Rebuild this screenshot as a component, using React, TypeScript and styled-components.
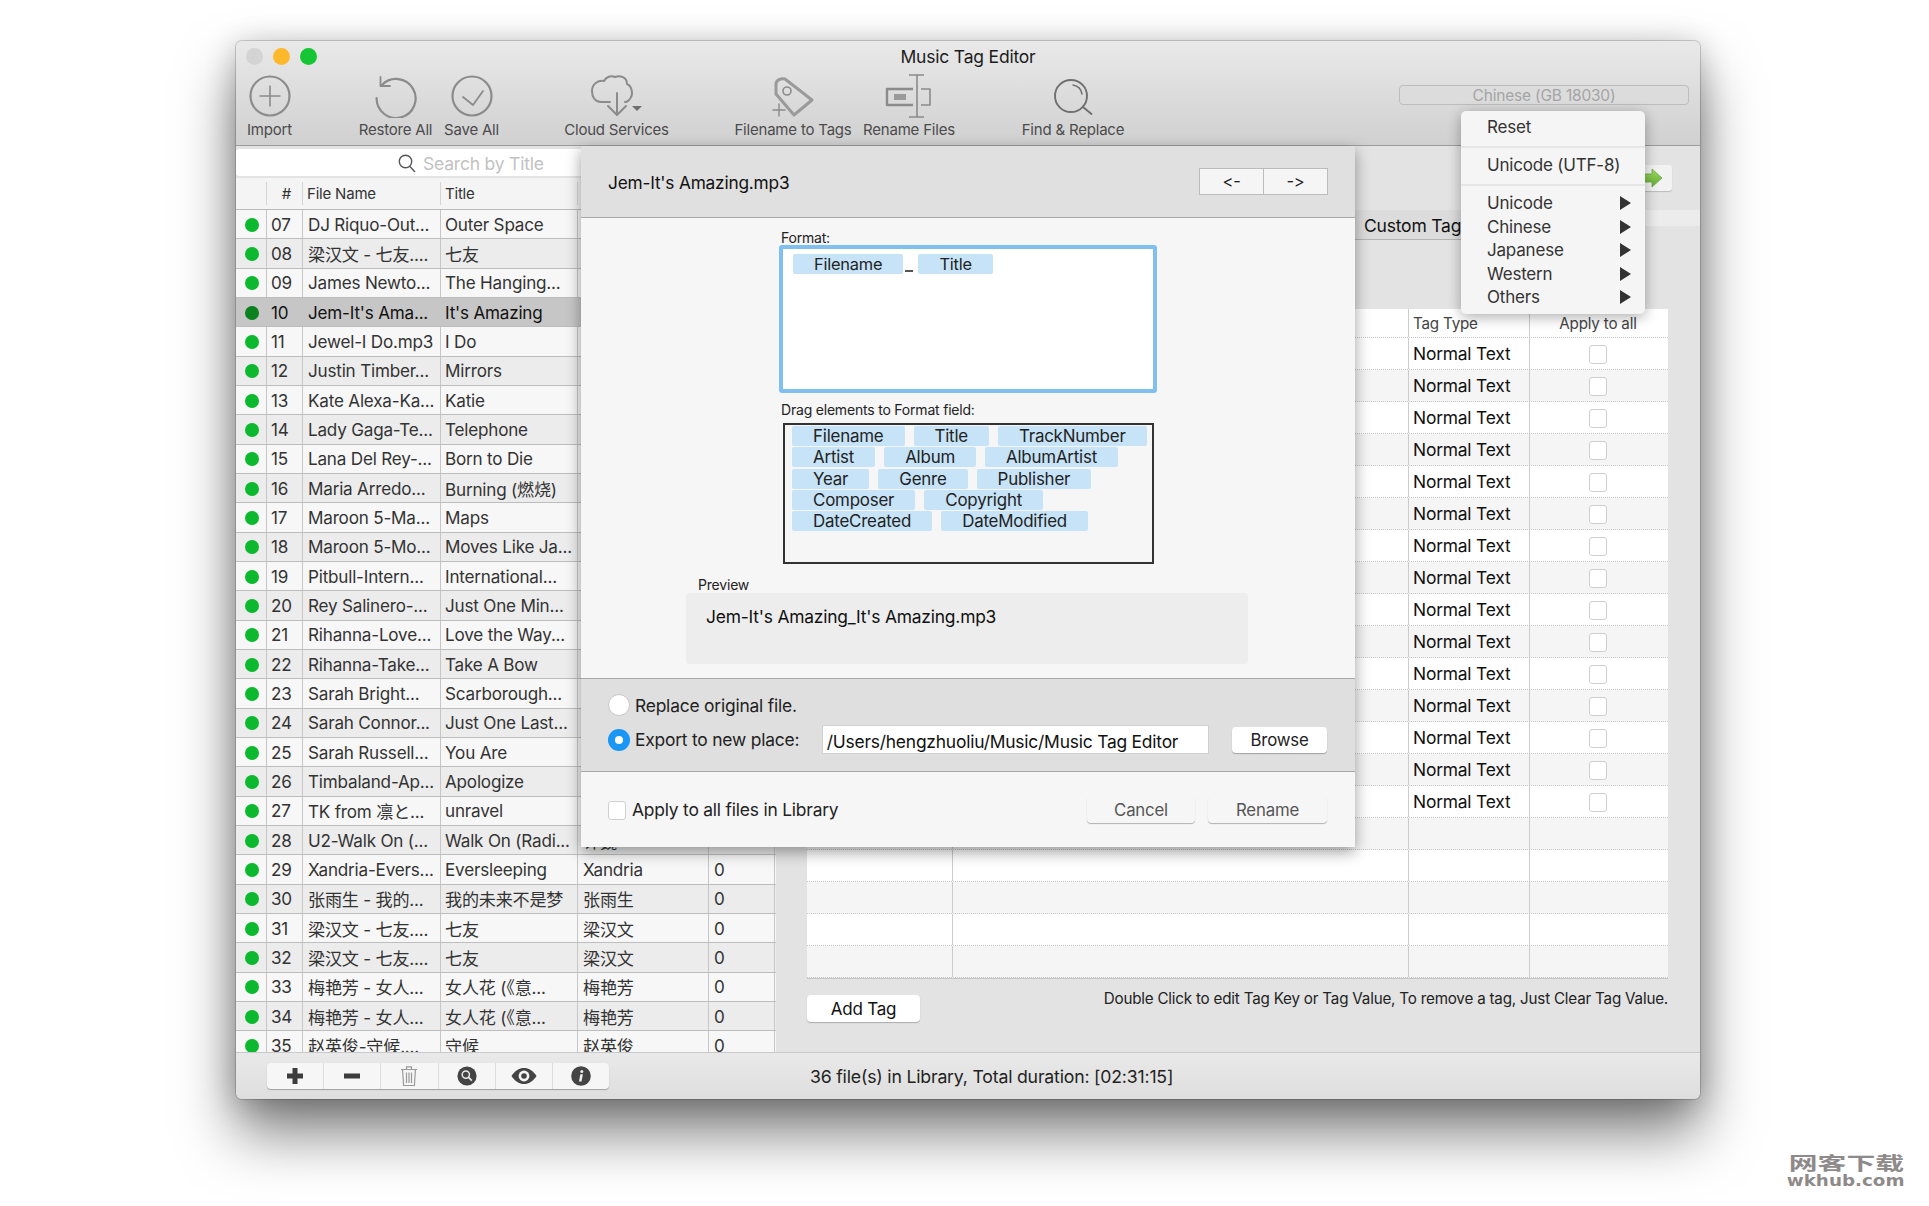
import styled, { createGlobalStyle } from 'styled-components'

const FONT = `Inter, "Noto Sans CJK SC", "Liberation Sans", sans-serif`

const GlobalStyle = createGlobalStyle`
  html, body {
    margin: 0;
    padding: 0;
    background: #fff;
    font-family: ${FONT};
    letter-spacing: -0.2px;
  }
  * { box-sizing: border-box; }
`

const Page = styled.div`
  position: relative;
  width: 1929px;
  height: 1206px;
  padding: 41px 0 0 236px;
  overflow: hidden;
  background: #fff;
`

const Window = styled.div`
  position: relative;
  display: flex;
  flex-direction: column;
  width: 1464px;
  height: 1058px;
  border-radius: 6px;
  background: #e3e3e3;
  box-shadow: 0 0 0 1px rgba(0, 0, 0, 0.16), 0 34px 58px rgba(0, 0, 0, 0.5), 0 4px 30px rgba(0, 0, 0, 0.22);
`

const Header = styled.header`
  flex: none;
  height: 105px;
  border-radius: 6px 6px 0 0;
  border-bottom: 1px solid #9c9c9c;
  background: linear-gradient(#e9e9e9, #d0d0d0);
`

const TitleBar = styled.div`
  display: grid;
  grid-template-columns: 1fr auto 1fr;
  align-items: center;
  height: 31px;
  padding: 0 10px;
`

const Lights = styled.div`
  display: flex;
  gap: 10px;
`

const Light = styled.span<{ $color: string }>`
  width: 17px;
  height: 17px;
  border-radius: 50%;
  background: ${(p) => p.$color};
`

const WindowTitle = styled.div`
  font-size: 17.5px;
  color: #1c1c1c;
`

const Toolbar = styled.div`
  display: flex;
  height: 73px;
  padding: 2px 0 0 11px;
`

const ToolItem = styled.div<{ $width: number; $gap?: number }>`
  display: flex;
  flex-direction: column;
  align-items: center;
  width: ${(p) => p.$width}px;
  margin-left: ${(p) => p.$gap ?? 0}px;
  color: #4b4b4b;
  svg {
    display: block;
    height: 44px;
  }
`

const ToolLabel = styled.span`
  margin-top: 3px;
  font-size: 15px;
  line-height: 17px;
  white-space: nowrap;
`

const EncodingField = styled.div`
  display: flex;
  align-items: center;
  justify-content: center;
  width: 290px;
  height: 20px;
  margin: 11px 11px 0 auto;
  border: 1px solid #bdbdbd;
  border-radius: 4px;
  background: #dcdcdc;
  color: #a4a4a4;
  font-size: 15.5px;
`

const Body = styled.div`
  flex: 1;
  display: flex;
  min-height: 0;
`

const Library = styled.section`
  flex: none;
  display: flex;
  flex-direction: column;
  width: 540px;
  padding-top: 3px;
  overflow: hidden;
`

const SearchBar = styled.div`
  flex: none;
  display: flex;
  align-items: center;
  gap: 7px;
  height: 27px;
  margin-bottom: 2px;
  padding: 1px 0 0 162px;
  border-radius: 3px 0 0 3px;
  background: #fff;
  color: #c2c2c2;
  font-size: 17.5px;
`

const ListHeader = styled.div`
  flex: none;
  display: grid;
  grid-template-columns: 31px 36px 138px 137px 131px 66px;
  height: 32px;
  border-bottom: 1px solid #bbb;
  background: #f4f4f4;
  color: #333;
  font-size: 15px;
`

const HeadCell = styled.div<{ $center?: boolean }>`
  display: flex;
  align-items: center;
  justify-content: ${(p) => (p.$center ? 'center' : 'flex-start')};
  margin: 4px 0;
  padding-left: 4px;
  border-right: 1px solid #d5d5d5;
`

const ListRow = styled.div<{ $odd: boolean; $selected: boolean }>`
  flex: none;
  display: grid;
  grid-template-columns: 31px 36px 138px 137px 131px 66px;
  height: 29.33px;
  border-bottom: 1px solid #bdbdbd;
  background: ${(p) => (p.$selected ? '#c6c6c6' : p.$odd ? '#ececec' : '#f7f7f7')};
  color: ${(p) => (p.$selected ? '#111' : '#333')};
  font-size: 17.1px;
`

const Cell = styled.div<{ $pad?: number }>`
  display: flex;
  align-items: center;
  padding-left: ${(p) => p.$pad ?? 5}px;
  border-right: 1px solid #c6c6c6;
  white-space: nowrap;
  overflow: hidden;
`

const StatusDot = styled.span<{ $selected: boolean }>`
  width: 14px;
  height: 14px;
  border-radius: 50%;
  background: ${(p) => (p.$selected ? '#0a801f' : '#0cb92e')};
`

const StatusCell = styled(Cell)`
  justify-content: center;
  padding: 1px 0 0 2px;
`

const TagPanel = styled.section`
  flex: 1;
  display: flex;
  flex-direction: column;
  min-width: 0;
`

const ArrowRow = styled.div`
  flex: none;
  display: flex;
  justify-content: flex-end;
  height: 26px;
  margin: 19px 28px 0 0;
`

const ArrowButton = styled.div`
  display: flex;
  align-items: center;
  justify-content: flex-end;
  width: 60px;
  padding-right: 8px;
  border-radius: 3px;
  background: #f2f2f2;
  box-shadow: 0 1px 1px rgba(0, 0, 0, 0.18);
`

const TabStrip = styled.div`
  flex: none;
  height: 30px;
  margin-top: 19px;
  padding-left: 579px;
  background: linear-gradient(#ececec 0 16px, transparent 16px);
`

const Tab = styled.div`
  display: flex;
  align-items: center;
  width: 140px;
  height: 30px;
  padding: 1px 0 0 9px;
  border-bottom: 1px solid #b4b4b4;
  background: #dcdcdc;
  color: #111;
  font-size: 17.5px;
`

const TagTable = styled.div`
  flex: none;
  width: 861px;
  margin: 69px 0 0 31px;
  border-bottom: 1px solid #c6c6c6;
  background: #fff;
`

const TagRowGrid = styled.div<{ $alt?: boolean; $height: number }>`
  display: grid;
  grid-template-columns: 146px 456px 121px 138px;
  height: ${(p) => p.$height}px;
  border-bottom: 1px dotted #c8c8c8;
  background: ${(p) => (p.$alt ? '#f5f5f5' : '#fff')};
`

const TagCell = styled.div<{ $center?: boolean; $head?: boolean }>`
  display: flex;
  align-items: center;
  justify-content: ${(p) => (p.$center ? 'center' : 'flex-start')};
  padding: ${(p) => (p.$center ? '0 2px 0 0' : '0 0 0 4px')};
  border-right: 1px solid #ccc;
  color: ${(p) => (p.$head ? '#444' : '#111')};
  font-size: ${(p) => (p.$head ? 15.2 : 17.4)}px;
  &:last-child {
    border-right: none;
  }
`

const Checkbox = styled.span`
  flex: none;
  width: 18px;
  height: 19px;
  margin-top: 1px;
  border: 1px solid #cfcfcf;
  border-radius: 3px;
  background: #fff;
`

const TagActions = styled.div`
  flex: none;
  display: flex;
  justify-content: space-between;
  width: 861px;
  margin: 16px 0 0 31px;
`

const AddTagButton = styled.div`
  display: flex;
  align-items: center;
  justify-content: center;
  width: 113px;
  height: 27px;
  border-radius: 4px;
  background: #fff;
  box-shadow: 0 1px 1px rgba(0, 0, 0, 0.25);
  color: #111;
  font-size: 17px;
`

const Hint = styled.div`
  margin-top: -5px;
  color: #222;
  font-size: 15.2px;
  line-height: 18px;
`

const Footer = styled.footer`
  flex: none;
  display: flex;
  align-items: center;
  height: 47px;
  padding-left: 31px;
  border-top: 1px solid #c9c9c9;
  border-radius: 0 0 6px 6px;
  background: linear-gradient(#e9e9e9, #dedede);
`

const FooterButtons = styled.div`
  display: flex;
  width: 342px;
  height: 26px;
  border-radius: 4px;
  background: #f6f6f6;
  box-shadow: 0 1px 1px rgba(0, 0, 0, 0.28);
`

const FooterButton = styled.div`
  flex: 1;
  display: flex;
  align-items: center;
  justify-content: center;
  border-right: 1px solid #dcdcdc;
  &:last-child {
    border-right: none;
  }
`

const StatusText = styled.div`
  margin-left: 201px;
  color: #222;
  font-size: 17.7px;
`

const Sheet = styled.div`
  position: absolute;
  left: 345px;
  top: 105px;
  display: flex;
  flex-direction: column;
  width: 774px;
  height: 701px;
  background: #f6f6f6;
  box-shadow: 0 5px 14px rgba(0, 0, 0, 0.38);
`

const SheetHeader = styled.div`
  flex: none;
  display: flex;
  align-items: center;
  justify-content: space-between;
  height: 72px;
  padding: 1px 27px 0 27px;
  border-bottom: 1px solid #a8a8a8;
  background: #e0e0e0;
  color: #111;
  font-size: 17.3px;
`

const Stepper = styled.div`
  display: flex;
  width: 129px;
  height: 27px;
  margin-top: -2px;
  border: 1px solid #bcbcbc;
  background: #f5f5f5;
`

const StepButton = styled.div`
  flex: 1;
  display: flex;
  align-items: center;
  justify-content: center;
  font-size: 16.5px;
  color: #222;
  & + & {
    border-left: 1px solid #bcbcbc;
  }
`

const SheetContent = styled.div`
  flex: none;
  display: flex;
  flex-direction: column;
  align-items: flex-start;
  height: 460px;
  padding-top: 12px;
`

const SmallLabel = styled.div<{ $left: number; $top?: number }>`
  height: 16px;
  margin: ${(p) => p.$top ?? 0}px 0 0 ${(p) => p.$left}px;
  color: #222;
  font-size: 14px;
  line-height: 16px;
`

const FormatBox = styled.div`
  display: flex;
  align-items: flex-start;
  width: 378px;
  height: 148px;
  margin: -1px 0 0 198px;
  padding: 5px 0 0 10px;
  border: 4px solid #7fc0f0;
  border-radius: 3px;
  background: #fff;
`

const Token = styled.span`
  flex: none;
  display: flex;
  align-items: center;
  height: 20px;
  padding: 0 21px;
  border-radius: 2px;
  background: #c6e3f8;
  color: #222;
  font-size: 16.4px;
`

const Underscore = styled.span`
  flex: none;
  width: 8px;
  height: 2px;
  margin: 16px 5px 0 2px;
  background: #555;
`

const ElementsBox = styled.div`
  display: flex;
  flex-direction: column;
  gap: 1.3px;
  width: 371px;
  height: 141px;
  margin: 5px 0 0 202px;
  padding: 1px 0 0 7px;
  border: 2px solid #333;
  background: #f6f6f6;
  ${Token} {
    font-size: 16.9px;
  }
`

const TokenRow = styled.div`
  display: flex;
  gap: 9px;
`

const PreviewBox = styled.div`
  width: 562px;
  height: 71px;
  margin-left: 105px;
  padding: 14px 20px;
  border-radius: 3px;
  background: #ededed;
  color: #111;
  font-size: 17.4px;
  line-height: 20px;
`

const OptionsBand = styled.div`
  flex: none;
  display: flex;
  flex-direction: column;
  height: 94px;
  padding: 15px 28px 0 27px;
  border-top: 1px solid #a8a8a8;
  border-bottom: 1px solid #a8a8a8;
  background: #dfdfdf;
  color: #222;
  font-size: 17.4px;
`

const OptionRow = styled.div<{ $top?: number }>`
  display: flex;
  align-items: center;
  margin-top: ${(p) => p.$top ?? 0}px;
`

const Radio = styled.span<{ $on?: boolean }>`
  flex: none;
  display: flex;
  align-items: center;
  justify-content: center;
  width: 22px;
  height: 22px;
  margin-right: 5px;
  border-radius: 50%;
  border: ${(p) => (p.$on ? 'none' : '1px solid #c8c8c8')};
  background: ${(p) => (p.$on ? '#1a96f5' : '#fff')};
  &::after {
    content: '';
    display: ${(p) => (p.$on ? 'block' : 'none')};
    width: 8px;
    height: 8px;
    border-radius: 50%;
    background: #fff;
  }
`

const ExportLabel = styled.span`
  width: 188px;
  white-space: nowrap;
`

const PathInput = styled.div`
  display: flex;
  align-items: center;
  width: 386px;
  height: 27px;
  padding: 4px 0 0 4px;
  background: #fff;
  box-shadow: 0 0 0 1px #d0d0d0;
  color: #111;
  font-size: 17.4px;
`

const PlainButton = styled.div<{ $width: number; $muted?: boolean }>`
  flex: none;
  display: flex;
  align-items: center;
  justify-content: center;
  width: ${(p) => p.$width}px;
  height: 26px;
  border-radius: 4px;
  background: ${(p) => (p.$muted ? '#f6f6f6' : '#fff')};
  box-shadow: 0 1px 1px rgba(0, 0, 0, 0.28);
  color: ${(p) => (p.$muted ? '#555' : '#222')};
  font-size: 16.8px;
`

const BrowseButton = styled(PlainButton)`
  margin-left: 24px;
`

const SheetFooter = styled.div`
  flex: 1;
  display: flex;
  align-items: center;
  gap: 13px;
  padding: 0 28px 0 27px;
  color: #222;
  font-size: 17.4px;
`

const ApplyLabel = styled.span`
  margin: 0 auto 0 -7px;
`

const Menu = styled.div`
  position: absolute;
  left: 1225px;
  top: 70px;
  width: 184px;
  height: 203px;
  padding-top: 4px;
  border-radius: 5px;
  background: #f5f5f5;
  box-shadow: 0 3px 14px rgba(0, 0, 0, 0.32);
  color: #333;
  font-size: 17px;
`

const MenuItem = styled.div`
  display: flex;
  align-items: center;
  justify-content: space-between;
  height: 23.4px;
  padding: 0 14px 0 26px;
`

const MenuRule = styled.div<{ $top: number; $bottom: number }>`
  height: 2px;
  margin: ${(p) => p.$top}px 0 ${(p) => p.$bottom}px;
  background: #e6e6e6;
`

const MenuArrow = styled.span`
  width: 0;
  height: 0;
  border-left: 11px solid #333;
  border-top: 7px solid transparent;
  border-bottom: 7px solid transparent;
`

const Watermark = styled.div`
  position: absolute;
  right: 25px;
  top: 1152px;
  display: flex;
  flex-direction: column;
  align-items: flex-end;
  color: #8f8a8a;
  font-weight: 700;
  line-height: 20px;
`

const WatermarkCjk = styled.span`
  font-family: "Noto Sans CJK SC", sans-serif;
  font-size: 18px;
  letter-spacing: 0;
  transform: scaleX(1.6);
  transform-origin: right center;
`

const WatermarkLatin = styled.span`
  margin-top: -1px;
  font-family: "DejaVu Sans", sans-serif;
  font-size: 15px;
  letter-spacing: 0;
  transform: scaleX(1.22);
  transform-origin: right center;
`

const toolStroke = { fill: 'none', stroke: '#8b8b8b', strokeLinecap: 'round', strokeLinejoin: 'round' } as const

const ImportIcon = () => (
  <svg width="44" height="44" viewBox="0 0 44 44" {...toolStroke} strokeWidth="2.2">
    <circle cx="22" cy="22" r="19.5" />
    <path d="M22 12v20M12 22h20" strokeWidth="1.6" />
  </svg>
)

const RestoreIcon = () => (
  <svg width="44" height="44" viewBox="0 0 44 44" {...toolStroke} strokeWidth="2.2">
    <path d="M8 11 A19.5 19.5 0 1 1 2.6 24" />
    <path d="M6.5 3v9H16" strokeWidth="1.8" />
  </svg>
)

const SaveIcon = () => (
  <svg width="44" height="44" viewBox="0 0 44 44" {...toolStroke} strokeWidth="2.2">
    <circle cx="22" cy="22" r="19.5" />
    <path d="M13 23l10 8 10-14" strokeWidth="1.8" />
  </svg>
)

const CloudIcon = () => (
  <svg width="56" height="44" viewBox="0 0 56 44" {...toolStroke} strokeWidth="2">
    <path d="M21 28H12C6 28 3 23 3 17 3 10 9 6 15 7c2-4 7-6 11-4 5-2 12 0 12 7 5 2 6 10 4 13-1 3-4 5-6 5" />
    <path d="M28 19v21M19 32l9 9 9-9" />
    <path d="M43 32h10l-5 5z" fill="#6e6e6e" stroke="none" />
  </svg>
)

const TagIcon = () => (
  <svg width="44" height="44" viewBox="0 0 44 44" {...toolStroke} strokeWidth="3" stroke="#9a9a9a">
    <path d="M5 10c0-4 5-6 9-5l27 21-18 15L5 20z" />
    <circle cx="16" cy="17" r="4" strokeWidth="1.6" stroke="#8b8b8b" />
    <path d="M8 30v12M2 36h12" strokeWidth="1.4" stroke="#8b8b8b" />
  </svg>
)

const RenameIcon = () => (
  <svg width="48" height="44" viewBox="0 0 48 44" {...toolStroke} strokeWidth="2" strokeLinecap="butt">
    <path d="M28 15H2v16h26" strokeWidth="2.4" />
    <rect x="9" y="20" width="12" height="6" fill="#9a9a9a" stroke="none" />
    <path d="M32 1v42M24 1h15M24 43h15" strokeWidth="1.6" />
    <path d="M36 15h9v16h-9" strokeWidth="1.6" />
  </svg>
)

const FindIcon = () => (
  <svg width="44" height="44" viewBox="0 0 44 44" {...toolStroke} stroke="#6f6f6f" strokeWidth="1.9">
    <circle cx="20" cy="22" r="16" />
    <path d="M32 33l8.5 7" />
    <path d="M22 11a11 11 0 0 1 9 9" strokeWidth="1.5" />
  </svg>
)

const SearchGlyph = () => (
  <svg width="18" height="19" viewBox="0 0 18 19" fill="none" stroke="#555" strokeWidth="1.4">
    <circle cx="7.5" cy="7.5" r="6.2" />
    <path d="M12 12.5l5 5.5" />
  </svg>
)

const GreenArrow = () => (
  <svg width="26" height="20" viewBox="0 0 26 20">
    <defs>
      <linearGradient id="arrowFill" x1="0" y1="0" x2="0" y2="1">
        <stop offset="0" stopColor="#a5dd62" />
        <stop offset="1" stopColor="#5cab33" />
      </linearGradient>
    </defs>
    <path d="M1 6h13V1l10 9-10 9v-5H1z" fill="url(#arrowFill)" stroke="#6ba846" strokeWidth="0.8" />
  </svg>
)

const PlusGlyph = () => (
  <svg width="18" height="18" viewBox="0 0 18 18">
    <path d="M6.5 1h5v5.5H17v5h-5.5V17h-5v-5.5H1v-5h5.5z" fill="#3c3c3c" />
  </svg>
)

const MinusGlyph = () => (
  <svg width="18" height="18" viewBox="0 0 18 18">
    <rect x="1" y="6.5" width="16" height="5" fill="#3c3c3c" />
  </svg>
)

const TrashGlyph = () => (
  <svg width="18" height="22" viewBox="0 0 18 22" fill="none" stroke="#9a9a9a" strokeWidth="1.2">
    <path d="M1 4.5h16M6.5 4.5V1.8h5v2.7" />
    <path d="M2.6 5l1 15.5h10.8l1-15.5" />
    <path d="M6.5 7.5v10.5M9 7.5v10.5M11.5 7.5v10.5" />
  </svg>
)

const LensGlyph = () => (
  <svg width="20" height="20" viewBox="0 0 20 20">
    <circle cx="10" cy="10" r="9.6" fill="#444" />
    <circle cx="8.8" cy="8.6" r="3.6" fill="none" stroke="#e8e8e8" strokeWidth="1.5" />
    <path d="M11.4 11.2l3.4 3.4" stroke="#e8e8e8" strokeWidth="1.8" />
  </svg>
)

const EyeGlyph = () => (
  <svg width="26" height="18" viewBox="0 0 26 18">
    <path d="M0.5 9C4 3.5 8.5 1 13 1s9 2.5 12.5 8C22 14.5 17.5 17 13 17S4 14.5 0.5 9z" fill="#444" />
    <circle cx="13" cy="9" r="5.4" fill="#f6f6f6" />
    <circle cx="13" cy="9" r="2.8" fill="#444" />
  </svg>
)

const InfoGlyph = () => (
  <svg width="20" height="20" viewBox="0 0 20 20">
    <circle cx="10" cy="10" r="9.8" fill="#444" />
    <circle cx="10.8" cy="5.4" r="1.5" fill="#eee" />
    <path d="M9.3 8.2h2.6l-1.4 7.4H8z" fill="#eee" />
  </svg>
)

type Track = { n: string; file: string; title: string; artist?: string; count?: string }

// artist and count of rows 07-27 sit behind the rename sheet, so they stay empty
const tracks: Track[] = [
  { n: '07', file: 'DJ Riquo-Out...', title: 'Outer Space' },
  { n: '08', file: '梁汉文 - 七友....', title: '七友' },
  { n: '09', file: 'James Newto...', title: 'The Hanging...' },
  { n: '10', file: "Jem-It's Ama...", title: "It's Amazing" },
  { n: '11', file: 'Jewel-I Do.mp3', title: 'I Do' },
  { n: '12', file: 'Justin Timber...', title: 'Mirrors' },
  { n: '13', file: 'Kate Alexa-Ka...', title: 'Katie' },
  { n: '14', file: 'Lady Gaga-Te...', title: 'Telephone' },
  { n: '15', file: 'Lana Del Rey-...', title: 'Born to Die' },
  { n: '16', file: 'Maria Arredo...', title: 'Burning (燃烧)' },
  { n: '17', file: 'Maroon 5-Ma...', title: 'Maps' },
  { n: '18', file: 'Maroon 5-Mo...', title: 'Moves Like Ja...' },
  { n: '19', file: 'Pitbull-Intern...', title: 'International...' },
  { n: '20', file: 'Rey Salinero-...', title: 'Just One Min...' },
  { n: '21', file: 'Rihanna-Love...', title: 'Love the Way...' },
  { n: '22', file: 'Rihanna-Take...', title: 'Take A Bow' },
  { n: '23', file: 'Sarah Bright...', title: 'Scarborough...' },
  { n: '24', file: 'Sarah Connor...', title: 'Just One Last...' },
  { n: '25', file: 'Sarah Russell...', title: 'You Are' },
  { n: '26', file: 'Timbaland-Ap...', title: 'Apologize' },
  { n: '27', file: 'TK from 凛と...', title: 'unravel' },
  { n: '28', file: 'U2-Walk On (...', title: 'Walk On (Radi...', artist: '许巍' },
  { n: '29', file: 'Xandria-Evers...', title: 'Eversleeping', artist: 'Xandria', count: '0' },
  { n: '30', file: '张雨生 - 我的...', title: '我的未来不是梦', artist: '张雨生', count: '0' },
  { n: '31', file: '梁汉文 - 七友....', title: '七友', artist: '梁汉文', count: '0' },
  { n: '32', file: '梁汉文 - 七友....', title: '七友', artist: '梁汉文', count: '0' },
  { n: '33', file: '梅艳芳 - 女人...', title: '女人花 (《意...', artist: '梅艳芳', count: '0' },
  { n: '34', file: '梅艳芳 - 女人...', title: '女人花 (《意...', artist: '梅艳芳', count: '0' },
  { n: '35', file: '赵英俊-守候....', title: '守候', artist: '赵英俊', count: '0' },
]

const elementRows = [
  ['Filename', 'Title', 'TrackNumber'],
  ['Artist', 'Album', 'AlbumArtist'],
  ['Year', 'Genre', 'Publisher'],
  ['Composer', 'Copyright'],
  ['DateCreated', 'DateModified'],
]

const App = () => (
  <Page>
    <GlobalStyle />
    <Window>
      <Header>
        <TitleBar>
          <Lights>
            <Light $color="#d4d4d4" />
            <Light $color="#fdb92b" />
            <Light $color="#15c534" />
          </Lights>
          <WindowTitle>Music Tag Editor</WindowTitle>
        </TitleBar>
        <Toolbar>
          <ToolItem $width={45}>
            <ImportIcon />
            <ToolLabel>Import</ToolLabel>
          </ToolItem>
          <ToolItem $width={75} $gap={66}>
            <RestoreIcon />
            <ToolLabel>Restore All</ToolLabel>
          </ToolItem>
          <ToolItem $width={55} $gap={11}>
            <SaveIcon />
            <ToolLabel>Save All</ToolLabel>
          </ToolItem>
          <ToolItem $width={105} $gap={65}>
            <CloudIcon />
            <ToolLabel>Cloud Services</ToolLabel>
          </ToolItem>
          <ToolItem $width={118} $gap={65}>
            <TagIcon />
            <ToolLabel>Filename to Tags</ToolLabel>
          </ToolItem>
          <ToolItem $width={92} $gap={11}>
            <RenameIcon />
            <ToolLabel>Rename Files</ToolLabel>
          </ToolItem>
          <ToolItem $width={104} $gap={66}>
            <FindIcon />
            <ToolLabel>Find &amp; Replace</ToolLabel>
          </ToolItem>
          <EncodingField>Chinese (GB 18030)</EncodingField>
        </Toolbar>
      </Header>

      <Body>
        <Library>
          <SearchBar>
            <SearchGlyph />
            Search by Title
          </SearchBar>
          <ListHeader>
            <HeadCell />
            <HeadCell $center>#</HeadCell>
            <HeadCell>File Name</HeadCell>
            <HeadCell>Title</HeadCell>
            <HeadCell />
            <HeadCell />
          </ListHeader>
          {tracks.map((t, i) => {
            const selected = t.n === '10'
            return (
              <ListRow key={t.n} $odd={i % 2 === 1} $selected={selected}>
                <StatusCell>
                  <StatusDot $selected={selected} />
                </StatusCell>
                <Cell $pad={4}>{t.n}</Cell>
                <Cell>{t.file}</Cell>
                <Cell $pad={4}>{t.title}</Cell>
                <Cell>{t.artist}</Cell>
                <Cell>{t.count}</Cell>
              </ListRow>
            )
          })}
        </Library>

        <TagPanel>
          <ArrowRow>
            <ArrowButton>
              <GreenArrow />
            </ArrowButton>
          </ArrowRow>
          <TabStrip>
            <Tab>Custom Tag</Tab>
          </TabStrip>
          <TagTable>
            <TagRowGrid $height={29}>
              <TagCell $head />
              <TagCell $head />
              <TagCell $head>Tag Type</TagCell>
              <TagCell $head $center>
                Apply to all
              </TagCell>
            </TagRowGrid>
            {Array.from({ length: 20 }, (_, i) => (
              <TagRowGrid key={i} $height={32} $alt={i % 2 === 1}>
                <TagCell />
                <TagCell />
                <TagCell>{i < 15 ? 'Normal Text' : ''}</TagCell>
                <TagCell $center>{i < 15 ? <Checkbox /> : null}</TagCell>
              </TagRowGrid>
            ))}
          </TagTable>
          <TagActions>
            <AddTagButton>Add Tag</AddTagButton>
            <Hint>Double Click to edit Tag Key or Tag Value, To remove a tag, Just Clear Tag Value.</Hint>
          </TagActions>
        </TagPanel>
      </Body>

      <Footer>
        <FooterButtons>
          <FooterButton>
            <PlusGlyph />
          </FooterButton>
          <FooterButton>
            <MinusGlyph />
          </FooterButton>
          <FooterButton>
            <TrashGlyph />
          </FooterButton>
          <FooterButton>
            <LensGlyph />
          </FooterButton>
          <FooterButton>
            <EyeGlyph />
          </FooterButton>
          <FooterButton>
            <InfoGlyph />
          </FooterButton>
        </FooterButtons>
        <StatusText>36 file(s) in Library, Total duration: [02:31:15]</StatusText>
      </Footer>

      <Sheet>
        <SheetHeader>
          Jem-It's Amazing.mp3
          <Stepper>
            <StepButton>&lt;-</StepButton>
            <StepButton>-&gt;</StepButton>
          </Stepper>
        </SheetHeader>
        <SheetContent>
          <SmallLabel $left={200}>Format:</SmallLabel>
          <FormatBox>
            <Token>Filename</Token>
            <Underscore />
            <Token>Title</Token>
          </FormatBox>
          <SmallLabel $left={200} $top={9}>
            Drag elements to Format field:
          </SmallLabel>
          <ElementsBox>
            {elementRows.map((row) => (
              <TokenRow key={row[0]}>
                {row.map((name) => (
                  <Token key={name}>{name}</Token>
                ))}
              </TokenRow>
            ))}
          </ElementsBox>
          <SmallLabel $left={117} $top={13}>
            Preview
          </SmallLabel>
          <PreviewBox>Jem-It's Amazing_It's Amazing.mp3</PreviewBox>
        </SheetContent>
        <OptionsBand>
          <OptionRow>
            <Radio />
            Replace original file.
          </OptionRow>
          <OptionRow $top={10}>
            <Radio $on />
            <ExportLabel>Export to new place:</ExportLabel>
            <PathInput>/Users/hengzhuoliu/Music/Music Tag Editor</PathInput>
            <BrowseButton $width={95}>Browse</BrowseButton>
          </OptionRow>
        </OptionsBand>
        <SheetFooter>
          <Checkbox />
          <ApplyLabel>Apply to all files in Library</ApplyLabel>
          <PlainButton $width={108} $muted>
            Cancel
          </PlainButton>
          <PlainButton $width={119} $muted>
            Rename
          </PlainButton>
        </SheetFooter>
      </Sheet>

      <Menu>
        <MenuItem>Reset</MenuItem>
        <MenuRule $top={8} $bottom={5} />
        <MenuItem>Unicode (UTF-8)</MenuItem>
        <MenuRule $top={7} $bottom={6} />
        {['Unicode', 'Chinese', 'Japanese', 'Western', 'Others'].map((name) => (
          <MenuItem key={name}>
            {name}
            <MenuArrow />
          </MenuItem>
        ))}
      </Menu>
    </Window>
    <Watermark>
      <WatermarkCjk>网客下载</WatermarkCjk>
      <WatermarkLatin>wkhub.com</WatermarkLatin>
    </Watermark>
  </Page>
)

export default App
